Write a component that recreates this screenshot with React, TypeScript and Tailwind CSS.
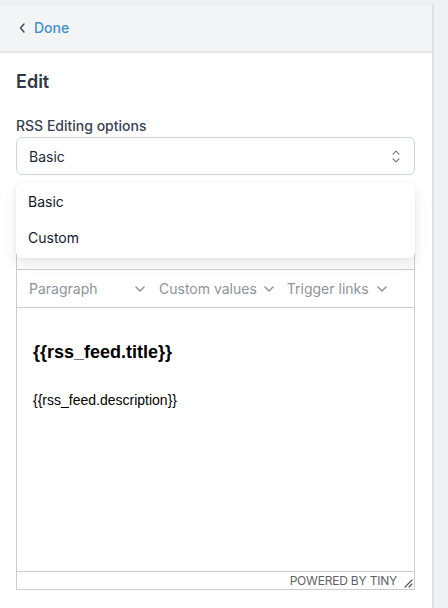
import React from "react";

function Chev({ className = "" }: { className?: string }) {
  return (
    <svg width="10" height="6" viewBox="0 0 10 6" className={className} fill="none">
      <path d="M1 1l4 4 4-4" stroke="currentColor" strokeWidth="1.5" strokeLinecap="round" strokeLinejoin="round" />
    </svg>
  );
}

export default function App() {
  return (
    <div className="w-[448px] h-[608px] overflow-hidden bg-[#eef0f4] flex font-['Inter',sans-serif]">
      <div className="w-[434px] shrink-0 flex flex-col bg-white border-r-2 border-[#dcdfe4] mt-[4px] border-t border-t-[#e9ebee]">
        {/* header */}
        <div className="h-[48px] shrink-0 bg-[#f3f4f6] border-b-2 border-[#e3e5e8] flex items-center pl-[19px]">
          <svg width="7" height="10" viewBox="0 0 7 10" fill="none" className="text-[#374151]">
            <path d="M5 1L1.5 5 5 9" stroke="currentColor" strokeWidth="1.3" strokeLinecap="round" strokeLinejoin="round" />
          </svg>
          <span className="ml-[8px] text-[14px] font-medium text-[#3d8fd0] leading-5">Done</span>
        </div>
        {/* body */}
        <div className="flex flex-col px-4 pt-[15px]">
          <div className="text-[18px] leading-[28px] font-semibold text-[#2f3744]">Edit</div>
          <div className="mt-[20px] text-[14px] leading-5 font-medium text-[#374151]">RSS Editing options</div>
          <div className="relative mt-[1px] w-[399px]">
            <div className="h-[38px] border border-[#d1d5db] rounded-[6px] flex items-center justify-between pl-[12px] pr-[10px]">
              <span className="text-[14px] text-[#1f2937]">Basic</span>
              <svg width="16" height="19" viewBox="0 0 24 24" fill="none" className="text-[#6b7280]">
                <path d="m7.5 15.5 4.5 4.5 4.5-4.5" stroke="currentColor" strokeWidth="1.6" strokeLinecap="round" strokeLinejoin="round" />
                <path d="m7.5 8.5 4.5-4.5 4.5 4.5" stroke="currentColor" strokeWidth="1.6" strokeLinecap="round" strokeLinejoin="round" />
              </svg>
            </div>
            {/* dropdown */}
            <div className="absolute z-10 left-0 top-[46px] w-[399px] bg-white rounded-[6px] shadow-[0_6px_14px_rgba(0,0,0,0.1),0_0_3px_rgba(0,0,0,0.05)] pb-[3px]">
              <div className="h-[36px] flex items-center pl-[12px] text-[14px] text-[#111827]">Basic</div>
              <div className="h-[36px] flex items-center pl-[12px] text-[14px] text-[#111827]">Custom</div>
            </div>
          </div>
          {/* editor */}
          <div className="mt-[72px] w-[399px] border border-[#cccccc] flex flex-col">
            <div className="h-[22px] border-b border-[#cccccc]" />
            <div className="h-[38px] border-b border-[#cccccc] flex items-center pl-[12px] text-[14px] text-[#8e939b]">
              <div className="w-[116px] flex items-center justify-between">
                <span>Paragraph</span>
                <Chev className="text-[#8e939b]" />
              </div>
              <div className="ml-[14px] flex items-center gap-[7px]">
                <span>Custom values</span>
                <Chev className="text-[#8e939b]" />
              </div>
              <div className="ml-[13px] flex items-center gap-[8px]">
                <span>Trigger links</span>
                <Chev className="text-[#8e939b]" />
              </div>
            </div>
            <div className="h-[263px] px-[16px] pt-[33px] font-['Liberation_Sans',Arial,sans-serif] text-black">
              <div className="text-[18px] leading-[22px] font-bold">{"{{rss_feed.title}}"}</div>
              <div className="mt-[29px] text-[14px] leading-[16px]">{"{{rss_feed.description}}"}</div>
            </div>
            <div className="h-[18px] border-t border-[#cccccc] flex items-center justify-end pr-[1px]">
              <span className="text-[12px] leading-[14px] text-[#616161] tracking-[-0.2px]">POWERED BY TINY</span>
              <svg width="10" height="10" viewBox="0 0 10 10" className="ml-[6px] mt-[4px] text-[#555]" fill="none">
                <path d="M9 2L2 9M9 6L6 9" stroke="currentColor" strokeWidth="1.2" strokeLinecap="round" />
              </svg>
            </div>
          </div>
        </div>
      </div>
    </div>
  );
}
